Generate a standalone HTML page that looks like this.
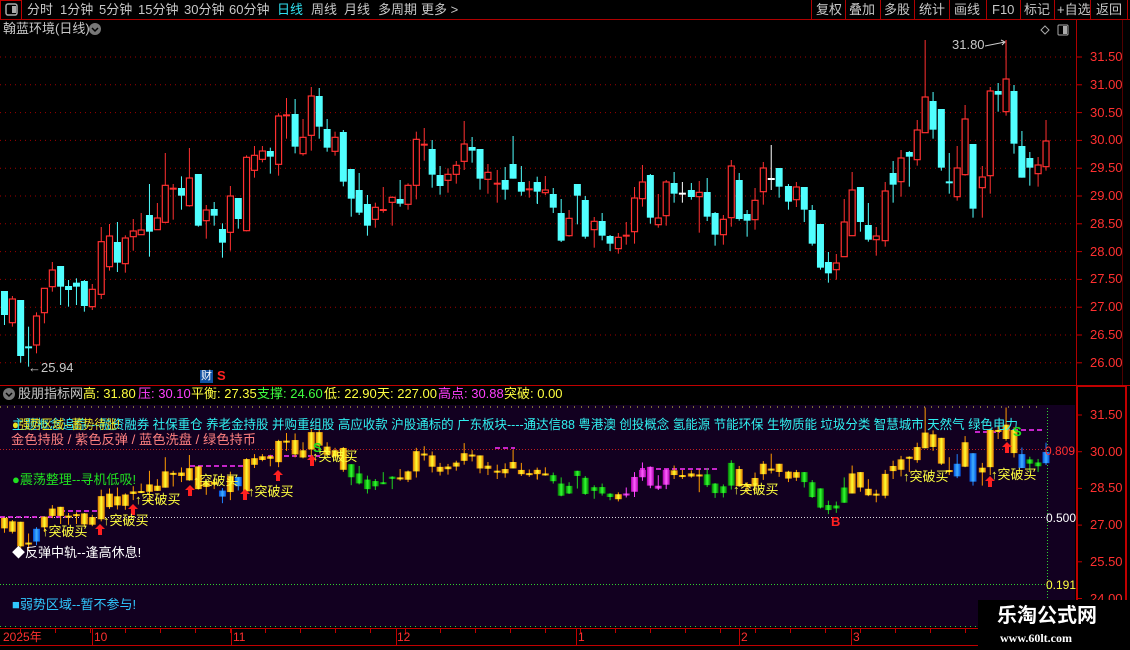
<!DOCTYPE html>
<html><head><meta charset="utf-8">
<style>
*{margin:0;padding:0;box-sizing:border-box}
body{width:1130px;height:650px;background:#000;overflow:hidden;position:relative;font-family:"Liberation Sans","Noto Sans CJK SC",sans-serif;font-size:13px;color:#c8c8c8}
.t{position:absolute;white-space:nowrap;line-height:16px}
svg{position:absolute;left:0;top:0}
</style></head><body>
<svg id="g" width="1130" height="650"></svg>

<div class="t" style="left:27px;top:2px">分时</div>
<div class="t" style="left:60px;top:2px">1分钟</div>
<div class="t" style="left:99px;top:2px">5分钟</div>
<div class="t" style="left:138px;top:2px">15分钟</div>
<div class="t" style="left:184px;top:2px">30分钟</div>
<div class="t" style="left:229px;top:2px">60分钟</div>
<div class="t" style="left:277px;top:2px;color:#30e0f0">日线</div>
<div class="t" style="left:311px;top:2px">周线</div>
<div class="t" style="left:344px;top:2px">月线</div>
<div class="t" style="left:378px;top:2px">多周期</div>
<div class="t" style="left:421px;top:2px">更多 &gt;</div>
<div class="t" style="left:816px;top:2px">复权</div>
<div class="t" style="left:849px;top:2px">叠加</div>
<div class="t" style="left:884px;top:2px">多股</div>
<div class="t" style="left:919px;top:2px">统计</div>
<div class="t" style="left:954px;top:2px">画线</div>
<div class="t" style="left:992px;top:2px">F10</div>
<div class="t" style="left:1024px;top:2px">标记</div>
<div class="t" style="left:1057px;top:2px">+自选</div>
<div class="t" style="left:1096px;top:2px">返回</div>

<div class="t" style="left:3px;top:21px">翰蓝环境(日线)</div>
<div class="t" style="left:952px;top:37px">31.80</div>
<div class="t" style="left:28px;top:360px">←25.94</div>
<div class="t" style="left:200px;top:370px;background:#1050a0;color:#fff;font-size:11px;line-height:13px;padding:0 1px">财</div>
<div class="t" style="left:217px;top:368px;color:#ff2020;font-weight:bold;font-size:13px">S</div>

<div id="ax"></div>

<div class="t" style="left:18px;top:386px">股朋指标网</div>
<div class="t" style="left:83px;top:386px;color:#ffff40">高: 31.80</div>
<div class="t" style="left:138px;top:386px;color:#ff40ff">压: 30.10</div>
<div class="t" style="left:191px;top:386px;color:#ffff40">平衡: 27.35</div>
<div class="t" style="left:257px;top:386px;color:#40ff40">支撑: 24.60</div>
<div class="t" style="left:324px;top:386px;color:#ffff40">低: 22.90</div>
<div class="t" style="left:377px;top:386px;color:#ffff40">天: 227.00</div>
<div class="t" style="left:438px;top:386px;color:#ff40ff">高点: 30.88</div>
<div class="t" style="left:504px;top:386px;color:#ffff40">突破: 0.00</div>

<div class="t" style="left:12px;top:472px;color:#20e020">●震荡整理--寻机低吸!</div>
<div class="t" style="left:12px;top:545px;color:#fff">◆反弹中轨--逢高休息!</div>
<div class="t" style="left:12px;top:597px;color:#30c8ff">■弱势区域--暂不参与!</div>
<div class="t" style="left:1045px;top:443px;color:#ff3030;font-size:12px">0.809</div>
<div class="t" style="left:1046px;top:510px;color:#fff;font-size:12px">0.500</div>
<div class="t" style="left:1046px;top:577px;color:#ffff40;font-size:12px">0.191</div>
<div class="t" style="left:831px;top:514px;color:#ff2020;font-weight:bold">B</div>
<div class="t" style="left:313px;top:440px;color:#20e020;font-weight:bold">S</div>
<div class="t" style="left:1013px;top:424px;color:#20e020;font-weight:bold">S</div>
<div id="buy"></div>

<div class="t" style="left:3px;top:629px;color:#ff3030;font-size:12px">2025年</div>
<div class="t" style="left:94px;top:629px;color:#ff3030;font-size:12px">10</div>
<div class="t" style="left:233px;top:629px;color:#ff3030;font-size:12px">11</div>
<div class="t" style="left:397px;top:629px;color:#ff3030;font-size:12px">12</div>
<div class="t" style="left:578px;top:629px;color:#ff3030;font-size:12px">1</div>
<div class="t" style="left:741px;top:629px;color:#ff3030;font-size:12px">2</div>
<div class="t" style="left:853px;top:629px;color:#ff3030;font-size:12px">3</div>

<div style="position:absolute;left:978px;top:600px;width:152px;height:50px;background:#000"></div>
<div class="t" style="left:997px;top:604px;color:#fff;font-weight:bold;font-size:20px;line-height:24px">乐淘公式网</div>
<div class="t" style="left:1000px;top:630px;color:#fff;font-family:'Liberation Serif',serif;font-weight:bold;font-size:12px">www.60lt.com</div>

<script>
var A=[[13,633,705,633,735,'c'],[36,657,728,648,740,'r'],[60,660,828,660,848,'c'],[83,802,802,740,860,'x'],[106,708,795,697,820,'r'],[129,625,698,625,730,'r'],[152,570,620,546,635,'r'],[176,558,620,558,675,'c'],[199,618,630,600,680,'c'],[222,608,620,595,675,'c'],[245,603,678,600,695,'c'],[268,628,680,612,690,'r'],[294,485,643,441,657,'r'],[318,468,560,432,572,'r'],[341,486,548,426,576,'c'],[364,474,551,466,578,'r'],[387,453,470,417,512,'r'],[410,450,464,399,464,'r'],[434,405,455,312,530,'c'],[457,414,449,369,449,'r'],[480,316,427,219,427,'r'],[503,326,326,312,419,'f'],[527,324,347,289,389,'c'],[550,294,377,204,380,'r'],[576,282,437,282,440,'c'],[599,390,422,375,476,'r'],[622,387,407,366,437,'c'],[646,447,488,430,533,'c'],[669,348,457,318,512,'r'],[692,354,417,354,446,'c'],[716,232,452,226,454,'r'],[739,226,271,198,293,'r'],[762,213,238,198,247,'r'],[785,213,230,203,281,'c'],[809,108,253,100,287,'r'],[832,106,106,54,176,'f'],[857,102,200,57,220,'c'],[880,172,221,117,227,'r'],[904,48,166,21,212,'r'],[927,48,140,24,176,'c'],[950,147,203,117,215,'c'],[973,172,214,155,227,'r'],[997,156,305,150,319,'c'],[1020,267,356,267,410,'c'],[1043,330,398,279,405,'c'],[1067,372,437,345,467,'c'],[1090,382,418,368,443,'r'],[1113,390,390,321,398,'f'],[1139,352,367,349,437,'r'],[1162,357,371,300,380,'c'],[1185,316,373,310,389,'r'],[1209,178,316,155,358,'r'],[1232,194,194,144,242,'f'],[1255,207,284,180,323,'c'],[1278,285,318,258,344,'c'],[1301,283,301,265,338,'r'],[1325,256,283,243,311,'r'],[1348,192,244,123,270,'r'],[1371,201,212,171,248,'c'],[1394,207,296,207,329,'c'],[1417,277,298,252,341,'r'],[1444,311,311,270,368,'f'],[1467,300,329,261,359,'c'],[1490,252,296,168,296,'c'],[1514,306,335,258,347,'c'],[1537,328,328,303,353,'f'],[1560,306,335,290,370,'c']];
var B=[[7,396,420,396,462,'c'],[30,420,428,378,435,'r'],[53,432,473,414,489,'c'],[76,489,572,447,576,'c'],[99,505,557,480,560,'r'],[123,402,437,402,523,'c'],[146,450,560,438,566,'c'],[172,514,539,501,593,'r'],[195,513,557,489,571,'c'],[218,558,581,555,603,'c'],[242,562,596,549,611,'r'],[265,557,557,516,584,'f'],[289,444,545,411,581,'r'],[312,396,446,345,470,'r'],[335,375,503,372,521,'c'],[358,504,524,432,533,'r'],[381,396,497,390,527,'r'],[404,399,431,366,458,'c'],[428,431,431,396,458,'w'],[454,420,441,399,449,'c'],[477,427,440,393,548,'r'],[500,426,500,384,513,'c'],[523,489,554,486,587,'c'],[547,508,554,495,584,'r'],[570,348,503,330,530,'r'],[593,390,507,369,512,'c'],[616,492,512,480,560,'c'],[639,451,509,414,539,'r'],[663,354,425,336,464,'r'],[686,387,387,285,420,'w'],[709,354,410,354,443,'c'],[736,408,455,402,479,'c'],[759,411,449,396,471,'r'],[782,411,479,411,516,'c'],[805,480,581,465,587,'c'],[829,522,653,522,659,'c'],[852,636,670,606,698,'c'],[875,639,659,612,689,'r'],[898,516,620,447,620,'r'],[921,420,557,366,557,'r'],[945,411,516,411,545,'c'],[968,525,569,459,575,'c'],[991,558,569,531,617,'r'],[1017,423,572,396,590,'r'],[1040,369,404,333,458,'c'],[1063,324,395,300,440,'r'],[1087,306,320,303,410,'c'],[1110,240,329,210,347,'r'],[1133,141,248,-30,248,'r'],[1156,153,239,126,266,'c'],[1180,177,353,177,362,'c'],[1203,397,397,309,431,'x'],[1226,354,440,288,452,'r'],[1249,207,374,165,377,'r'],[1272,282,476,282,503,'c'],[1299,381,413,348,503,'r'],[1322,123,377,111,431,'r'],[1345,123,134,99,185,'c'],[1368,87,185,-30,197,'r'],[1391,123,281,105,311,'c'],[1414,288,383,243,383,'c'],[1437,324,353,306,407,'c'],[1461,345,371,321,410,'r'],[1484,273,350,210,362,'r']];
var K=2.904;
var C=[];
A.forEach(function(a){C.push({x:a[0]/K,bt:80+a[1]/3,bb:80+a[2]/3,wt:80+a[3]/3,wb:80+a[4]/3,t:a[5]})});
B.forEach(function(a){C.push({x:535+a[0]/K,bt:50+a[1]/3,bb:50+a[2]/3,wt:50+a[3]/3,wb:50+a[4]/3,t:a[5]})});
var s='<defs>';
function grad(id,a,b){return '<linearGradient id="'+id+'" x1="0" x2="1" y1="0" y2="0"><stop offset="0" stop-color="'+a+'"/><stop offset="0.5" stop-color="'+b+'"/><stop offset="1" stop-color="'+a+'"/></linearGradient>';}
s+=grad('gd','#e07800','#ffff30')+grad('bl','#0050e0','#40b0ff')+grad('gr','#007000','#30ff30')+grad('mg','#b000b0','#ff60ff')+'</defs>';
s+='<rect x="0.5" y="0.5" width="21" height="19" fill="none" stroke="#c00000"/><rect x="6" y="4" width="11" height="11" rx="2" fill="none" stroke="#aaa" stroke-width="1.5"/><rect x="12" y="6" width="4" height="7" fill="#aaa"/>';
s+='<line x1="0" y1="19.5" x2="1130" y2="19.5" stroke="#b00000"/>';
[811,845,880,914,949,986,1020,1054,1090,1127].forEach(function(x){s+='<line x1="'+x+'.5" y1="0" x2="'+x+'.5" y2="19" stroke="#b00000"/>'});
s+='<circle cx="95" cy="29" r="6" fill="#777"/><path d="M92 28l3 3 3-3" stroke="#000" stroke-width="1.5" fill="none"/>';
s+='<path d="M1045 26l4 4-4 4-4-4z" fill="none" stroke="#aaa"/><rect x="1058" y="25" width="10" height="10" rx="1" fill="none" stroke="#aaa"/><rect x="1063" y="26" width="4" height="8" fill="#aaa"/>';
var ax='';
for(var i=0;i<12;i++){var y=57+i*27.8;var p=(31.5-i*0.5).toFixed(2);
s+='<line x1="0" y1="'+y.toFixed(1)+'" x2="1075" y2="'+y.toFixed(1)+'" stroke="#a00000" stroke-dasharray="1,4"/>';
s+='<line x1="1076" y1="'+y.toFixed(1)+'" x2="1082" y2="'+y.toFixed(1)+'" stroke="#c00000"/>';
ax+='<div class="t" style="left:1090px;top:'+(y-8).toFixed(0)+'px;color:#ff3030">'+p+'</div>';}
for(var i=0;i<6;i++){var y=415+i*36.7;ax+='<div class="t" style="left:1090px;top:'+(y-8).toFixed(0)+'px;color:#ff3030">'+(31.5-i*1.5).toFixed(2)+'</div>';
s+='<line x1="1076" y1="'+y.toFixed(1)+'" x2="1082" y2="'+y.toFixed(1)+'" stroke="#c00000"/>';}
document.getElementById('ax').innerHTML=ax;
s+='<line x1="1076.5" y1="20" x2="1076.5" y2="645" stroke="#b00000"/>';
s+='<line x1="1122.5" y1="20" x2="1122.5" y2="385" stroke="#500000"/>';
s+='<rect x="1077" y="386" width="49" height="242" fill="none" stroke="#c00000" stroke-width="2"/>';
s+='<line x1="0" y1="385.5" x2="1130" y2="385.5" stroke="#c00000"/>';
s+='<line x1="1006" y1="40" x2="1006" y2="60" stroke="#ff3030"/><path d="M985 46l20-4m-4-2l4 2-3 3" stroke="#ccc" fill="none"/>';
s+='<circle cx="9" cy="394" r="6" fill="#777"/><path d="M6 393l3 3 3-3" stroke="#000" stroke-width="1.5" fill="none"/>';
s+='<rect x="0" y="405" width="1075" height="222" fill="#120020"/>';
s+='<line x1="0" y1="407" x2="1040" y2="407" stroke="#e0e040" stroke-dasharray="1,6"/>';
s+='<line x1="0" y1="449.5" x2="1045" y2="449.5" stroke="#c02020" stroke-dasharray="1,2"/>';
s+='<line x1="0" y1="517.5" x2="1045" y2="517.5" stroke="#ddd" stroke-dasharray="1,2"/>';
s+='<line x1="0" y1="584.5" x2="1045" y2="584.5" stroke="#30d030" stroke-dasharray="1,2"/>';
s+='<line x1="0" y1="626.5" x2="1075" y2="626.5" stroke="#30d030" stroke-dasharray="1,4"/>';
s+='<line x1="1047.5" y1="408" x2="1047.5" y2="627" stroke="#30d030" stroke-dasharray="1,2"/>';
[[0,70,517],[60,100,511],[190,245,466],[268,320,456],[495,515,448],[640,720,469],[1005,1045,430],[975,1000,432]].forEach(function(m){s+='<line x1="'+m[0]+'" y1="'+m[2]+'" x2="'+m[1]+'" y2="'+m[2]+'" stroke="#ff30ff" stroke-width="1.5" stroke-dasharray="5,3"/>'});
s+='<line x1="0" y1="628.5" x2="1130" y2="628.5" stroke="#c00000"/><line x1="0" y1="645.5" x2="1130" y2="645.5" stroke="#c00000"/>';
[92,231,396,576,739,851].forEach(function(x){s+='<line x1="'+x+'.5" y1="628" x2="'+x+'.5" y2="645" stroke="#c00000"/>'});
for(var x=20;x<1075;x+=35){s+='<line x1="'+x+'.5" y1="629" x2="'+x+'.5" y2="633" stroke="#c00000"/>';}
function im(y){return 415+(y-57)*0.4394;}
function icol(x,t){
 if((x>345&&x<400)||(x>548&&x<612)||(x>700&&x<732)||(x>798&&x<848)||(x>1028&&x<1042))return 'gr';
 if(x>625&&x<668)return 'mg';
 if(Math.abs(x-35)<3||Math.abs(x-223)<3||Math.abs(x-238)<3||Math.abs(x-958)<3||Math.abs(x-974)<3||Math.abs(x-1023)<3||Math.abs(x-1046)<3)return 'bl';
 return 'gd';}
var wc={gd:'#ff9a00',bl:'#2080ff',gr:'#20d020',mg:'#ff40ff'};
C.forEach(function(c){
 var x=c.x,bt=c.bt,bb=c.bb;
 if(c.t=='c'){s+='<line x1="'+x+'" y1="'+c.wt+'" x2="'+x+'" y2="'+c.wb+'" stroke="#50ffff"/><rect x="'+(x-3.5)+'" y="'+bt+'" width="7" height="'+Math.max(bb-bt,1.5)+'" fill="#50ffff"/>';}
 else if(c.t=='r'){s+='<line x1="'+x+'" y1="'+c.wt+'" x2="'+x+'" y2="'+bt+'" stroke="#ff3030"/><line x1="'+x+'" y1="'+bb+'" x2="'+x+'" y2="'+c.wb+'" stroke="#ff3030"/><rect x="'+(x-3)+'" y="'+bt+'" width="6" height="'+Math.max(bb-bt,1)+'" fill="#000" stroke="#ff3030" stroke-width="1.2"/>';}
 else {var col=c.t=='w'?'#fff':(c.t=='x'?'#50ffff':'#ff3030');s+='<line x1="'+x+'" y1="'+c.wt+'" x2="'+x+'" y2="'+c.wb+'" stroke="'+col+'"/><rect x="'+(x-3.5)+'" y="'+(bt-1)+'" width="7" height="2" fill="'+col+'"/>';}
 var k=icol(x,c.t);var a=im(bt),b=im(bb),wt=im(c.wt),wb=im(c.wb);
 s+='<line x1="'+x+'" y1="'+wt+'" x2="'+x+'" y2="'+wb+'" stroke="'+wc[k]+'"/><rect x="'+(x-3.5)+'" y="'+a+'" width="7" height="'+Math.max(b-a,2)+'" fill="url(#'+k+')"/>';
});
[100,133,190,245,278,312,990,1007].forEach(function(x,i){var y=[532,512,493,497,478,463,484,450][i];s+='<path d="M'+x+' '+(y-8)+'l-5 5h3v6h4v-6h3z" fill="#ff2020"/>';});
s+='<text x="12" y="429" font-size="13" fill="#30f0f0" textLength="1006" lengthAdjust="spacingAndGlyphs" font-family="Liberation Sans, Noto Sans CJK SC, sans-serif">主题概念追踪---融资融券 社保重仓 养老金持股 并购重组股 高应收款 沪股通标的 广东板块----通达信88 粤港澳 创投概念 氢能源 节能环保 生物质能 垃圾分类 智慧城市 天然气 绿色电力</text>';
s+='<text x="12" y="429" font-size="13" fill="#e8e020" textLength="108" lengthAdjust="spacingAndGlyphs" font-family="Liberation Sans, Noto Sans CJK SC, sans-serif">●强势区域--蓄势待涨!</text>';
s+='<text x="11" y="444" font-size="13" fill="#ff8080" textLength="245" lengthAdjust="spacingAndGlyphs" font-family="Liberation Sans, Noto Sans CJK SC, sans-serif">金色持股 / 紫色反弹 / 蓝色洗盘 / 绿色持币</text>';
document.getElementById('g').innerHTML=s;
var bu='';[[42,524],[103,513],[135,492],[193,473],[248,484],[312,449],[733,482],[903,469],[991,467]].forEach(function(p){bu+='<div class="t" style="left:'+p[0]+'px;top:'+p[1]+'px;color:#ffff40">↑突破买</div>'});
document.getElementById('buy').innerHTML=bu;
</script>
</body></html>
